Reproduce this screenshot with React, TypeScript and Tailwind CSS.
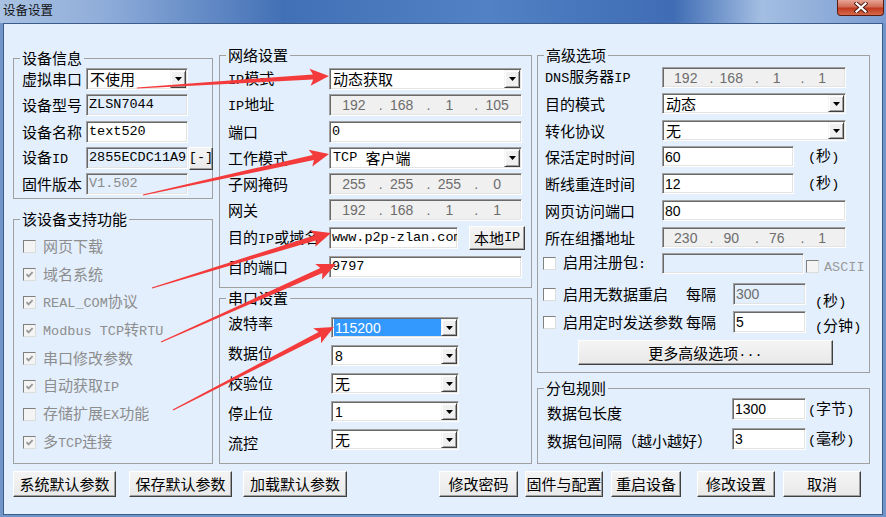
import React from "react";

const CJK = /[\u2E80-\u9FFF\uF900-\uFAFF\uFF00-\uFFEF\u3000-\u303F]/;

type Run = { cjk: boolean; t: string };
function runs(s: string): Run[] {
  const out: Run[] = [];
  for (const ch of s) {
    const c = CJK.test(ch);
    const last = out[out.length - 1];
    if (last && last.cjk === c) last.t += ch;
    else out.push({ cjk: c, t: ch });
  }
  return out;
}

function T({ t, sans }: { t: string; sans?: boolean }) {
  return (
    <>
      {runs(t).map((r, i) =>
        r.cjk ? (
          <span key={i} className="font-['Noto_Sans_CJK_SC',sans-serif] text-[15px]">
            {r.t}
          </span>
        ) : sans ? (
          <span key={i} className="font-['Liberation_Sans',sans-serif] text-[14px]">
            {r.t}
          </span>
        ) : (
          <span key={i} className="font-['Liberation_Mono',monospace] text-[13.5px]">
            {r.t}
          </span>
        )
      )}
    </>
  );
}

const SUNKEN =
  "border border-t-[#a0a0a0] border-l-[#a0a0a0] border-r-white border-b-white shadow-[inset_1px_1px_0_#696969,inset_-1px_-1px_0_#e3e3e3]";
const RAISED =
  "border border-t-white border-l-white border-r-[#404040] border-b-[#404040] shadow-[inset_-1px_-1px_0_#a0a0a0] bg-[linear-gradient(#f4f4f4,#e9e9e9)]";

function Label({ t, cls = "" }: { t: string; cls?: string }) {
  return (
    <div className={`whitespace-pre leading-[16px] shrink-0 ${cls}`}>
      <T t={t} />
    </div>
  );
}

function Field({
  t,
  cls = "",
  bg = "bg-white",
  color = "text-black",
  sans,
}: {
  t: string;
  cls?: string;
  bg?: string;
  color?: string;
  sans?: boolean;
}) {
  return (
    <div
      className={`${SUNKEN} ${bg} ${color} ${cls} shrink-0 flex items-center overflow-x-clip whitespace-pre leading-[16px] pl-[2px]`}
    >
      <T t={t} sans={sans} />
    </div>
  );
}

function DropBtn() {
  return (
    <div className="w-[16px] shrink-0 flex items-center justify-center border border-t-[#f4f4f4] border-l-[#f4f4f4] border-r-[#404040] border-b-[#404040] shadow-[inset_1px_1px_0_#fff,inset_-1px_-1px_0_#a0a0a0] bg-[#f0f0f0]">
      <svg width="7" height="4" viewBox="0 0 7 4">
        <path d="M0 0H7L3.5 4Z" fill="#000" />
      </svg>
    </div>
  );
}

function Select({ t, cls = "", sans, hl }: { t: string; cls?: string; sans?: boolean; hl?: boolean }) {
  return (
    <div className={`${SUNKEN} bg-white ${cls} shrink-0 flex items-stretch p-[1px] pl-[2px]`}>
      <div
        className={`flex-1 flex items-center whitespace-pre leading-[16px] pl-[1px] ${
          hl ? "bg-[#3399ff] text-white" : "text-black"
        }`}
      >
        <T t={t} sans={sans} />
      </div>
      <DropBtn />
    </div>
  );
}

function IP({ p, cls = "" }: { p: string[]; cls?: string }) {
  return (
    <div
      className={`${SUNKEN} bg-[#f0f0f0] text-[#6d6d6d] ${cls} shrink-0 flex items-center font-['Liberation_Sans',sans-serif] text-[14px] leading-[16px]`}
    >
      {p.map((x, i) => (
        <React.Fragment key={i}>
          {i > 0 && <span className="w-0 shrink-0 translate-x-[1px]">.</span>}
          <span className="flex-1 text-center">{x}</span>
        </React.Fragment>
      ))}
    </div>
  );
}

function CB({ on, dis, cls = "" }: { on?: boolean; dis?: boolean; cls?: string }) {
  return (
    <div
      className={`w-[13px] h-[13px] shrink-0 border border-t-[#808080] border-l-[#808080] border-r-[#dcdcdc] border-b-[#dcdcdc] ${
        dis ? "bg-[#f4f4f4]" : "bg-white"
      } flex items-center justify-center ${cls}`}
    >
      {on && (
        <svg width="9" height="9" viewBox="0 0 9 9">
          <path d="M1.5 4.2 L3.6 6.4 L7.6 2.2" fill="none" stroke={dis ? "#9a9a9a" : "#000"} strokeWidth="1.9" />
        </svg>
      )}
    </div>
  );
}

function Btn({ t, cls = "" }: { t: string; cls?: string }) {
  return (
    <div className={`${RAISED} ${cls} shrink-0 flex items-center justify-center whitespace-pre leading-[16px] text-black`}>
      <T t={t} />
    </div>
  );
}

function Group({ title, cls = "", children }: { title: string; cls?: string; children?: React.ReactNode }) {
  return (
    <fieldset className={`border border-[#a0a0a0] min-w-0 ${cls}`}>
      <legend className="ml-[6px] px-[2px] h-[16px] leading-[16px] whitespace-pre">
        <T t={title} />
      </legend>
      {children}
    </fieldset>
  );
}

const ARROWS: [number, number, number, number][] = [
  [137, 88, 329, 76],
  [143, 195, 329, 154],
  [152, 288, 331, 233],
  [161, 342, 336, 264],
  [173, 410, 334, 327],
];

function arrowPoints(sx: number, sy: number, tx: number, ty: number) {
  const dx = tx - sx;
  const dy = ty - sy;
  const L = Math.hypot(dx, dy);
  const ux = dx / L;
  const uy = dy / L;
  const nx = -uy;
  const ny = ux;
  const hl = 19;
  const hw = 8.5;
  const s0 = 0.6;
  const s1 = 2.6;
  const bx = tx - ux * hl;
  const by = ty - uy * hl;
  const pts = [
    [sx + nx * s0, sy + ny * s0],
    [bx + nx * s1 + ux * 3, by + ny * s1 + uy * 3],
    [bx + nx * hw, by + ny * hw],
    [tx, ty],
    [bx - nx * hw, by - ny * hw],
    [bx - nx * s1 + ux * 3, by - ny * s1 + uy * 3],
    [sx - nx * s0, sy - ny * s0],
  ];
  return pts.map((p) => `${p[0].toFixed(1)},${p[1].toFixed(1)}`).join(" ");
}

export default function App() {
  const feats: [string, boolean][] = [
    ["网页下载", false],
    ["域名系统", true],
    ["REAL_COM协议", true],
    ["Modbus TCP转RTU", true],
    ["串口修改参数", true],
    ["自动获取IP", true],
    ["存储扩展EX功能", false],
    ["多TCP连接", true],
  ];
  return (
    <div className="relative w-[886px] h-[517px] overflow-hidden bg-[#7194c9] flex flex-col font-['Noto_Sans_CJK_SC',sans-serif] text-[15px] leading-[16px] text-black">
      {/* title bar */}
      <div className="h-[23px] shrink-0 flex items-start bg-[linear-gradient(90deg,#a9c2e3_0%,#8eacd9_12%,#4270b6_32%,#5281c5_55%,#3f6cb4_76%,#a3bee2_86%,#7b9cd0_100%)]">
        <span className="ml-[3px] mt-[3px] text-[12.5px] leading-[14px] text-[#111]">设备设置</span>
        <div className="ml-auto mr-[2px] w-[47px] h-[16px] rounded-b-[4px] border border-t-0 border-[#5b1b10] bg-[linear-gradient(#e6a596,#d06c56_45%,#c03a1f_55%,#d56a4b)] flex items-center justify-center">
          <svg width="14" height="11" viewBox="0 0 14 11">
            <path d="M2.5 1.5 L11.5 9.5 M11.5 1.5 L2.5 9.5" stroke="#4a1a10" strokeWidth="4" strokeLinecap="square" />
            <path d="M2.5 1.5 L11.5 9.5 M11.5 1.5 L2.5 9.5" stroke="#fff" strokeWidth="2.2" strokeLinecap="square" />
          </svg>
        </div>
      </div>

      {/* client area */}
      <div className="mx-[3px] h-[492px] shrink-0 border border-[#3c5d8c] bg-[#e3effd] flex flex-col">
        <div className="flex pl-[9px] h-[440px]">
          {/* left column */}
          <div className="w-[200px] shrink-0 flex flex-col pt-[26px]">
            <Group title="设备信息" cls="h-[149px]">
              <div className="flex flex-col pl-[8px] pt-[2px]">
                <div className="flex items-center h-[22px]">
                  <Label t="虚拟串口" cls="w-[64px]" />
                  <Select t="不使用" cls="w-[102px] h-[22px]" />
                </div>
                <div className="flex items-center h-[22px] mt-[4px]">
                  <Label t="设备型号" cls="w-[64px]" />
                  <Field t="ZLSN7044" bg="bg-[#e3effd]" cls="w-[102px] h-[22px]" />
                </div>
                <div className="flex items-center h-[22px] mt-[5px]">
                  <Label t="设备名称" cls="w-[64px]" />
                  <Field t="text520" cls="w-[102px] h-[22px]" />
                </div>
                <div className="flex items-center h-[22px] mt-[4px]">
                  <Label t="设备ID" cls="w-[64px]" />
                  <Field t="2855ECDC11A9" bg="bg-[#e3effd]" cls="w-[102px] h-[22px]" />
                  <Btn t="[-]" cls="w-[24px] h-[23px] ml-[1px]" />
                </div>
                <div className="flex items-center h-[22px] mt-[4px]">
                  <Label t="固件版本" cls="w-[64px]" />
                  <Field t="V1.502" bg="bg-[#e3effd]" color="text-[#8a8a8a]" cls="w-[102px] h-[22px]" />
                </div>
              </div>
            </Group>
            <Group title="该设备支持功能" cls="h-[253px] mt-[12px]">
              <div className="flex flex-col pl-[9px] pt-[5px]">
                {feats.map(([t, on]) => (
                  <div key={t} className="flex items-center h-[28px]">
                    <CB on={on} dis />
                    <Label t={t} cls="ml-[7px] text-[#8d8d8d]" />
                  </div>
                ))}
              </div>
            </Group>
          </div>

          {/* middle column */}
          <div className="w-[313px] shrink-0 ml-[6px] flex flex-col pt-[23px]">
            <Group title="网络设置" cls="h-[241px]">
              <div className="flex flex-col pl-[8px] pt-[5px]">
                <div className="flex items-center h-[22px]">
                  <Label t="IP模式" cls="w-[101px]" />
                  <Select t="动态获取" cls="w-[193px] h-[22px]" />
                </div>
                <div className="flex items-center h-[22px] mt-[4px]">
                  <Label t="IP地址" cls="w-[101px]" />
                  <IP p={["192", "168", "1", "105"]} cls="w-[193px] h-[22px]" />
                </div>
                <div className="flex items-center h-[22px] mt-[5px]">
                  <Label t="端口" cls="w-[101px]" />
                  <Field t="0" cls="w-[193px] h-[22px]" />
                </div>
                <div className="flex items-center h-[22px] mt-[4px]">
                  <Label t="工作模式" cls="w-[101px]" />
                  <Select t="TCP 客户端" cls="w-[193px] h-[22px]" />
                </div>
                <div className="flex items-center h-[22px] mt-[4px]">
                  <Label t="子网掩码" cls="w-[101px]" />
                  <IP p={["255", "255", "255", "0"]} cls="w-[193px] h-[22px]" />
                </div>
                <div className="flex items-center h-[22px] mt-[4px]">
                  <Label t="网关" cls="w-[101px]" />
                  <IP p={["192", "168", "1", "1"]} cls="w-[193px] h-[22px]" />
                </div>
                <div className="flex items-center h-[24px] mt-[5px]">
                  <Label t="目的IP或域名" cls="w-[101px]" />
                  <Field t="www.p2p-zlan.com" cls="w-[129px] h-[22px]" />
                  <Btn t="本地IP" cls="w-[56px] h-[24px] ml-[11px]" />
                </div>
                <div className="flex items-center h-[22px] mt-[6px]">
                  <Label t="目的端口" cls="w-[101px]" />
                  <Field t="9797" cls="w-[193px] h-[22px]" />
                </div>
              </div>
            </Group>
            <Group title="串口设置" cls="h-[174px] mt-[2px]">
              <div className="flex pl-[8px]">
                <div className="w-[103px] shrink-0 flex flex-col pt-[7px] gap-[10px]">
                  {["波特率", "数据位", "校验位", "停止位", "流控"].map((l) => (
                    <div key={l} className="h-[20px] flex items-center">
                      <Label t={l} />
                    </div>
                  ))}
                </div>
                <div className="flex flex-col pt-[11px] gap-[7px]">
                  <Select t="115200" sans hl cls="w-[128px] h-[21px]" />
                  <Select t="8" sans cls="w-[128px] h-[21px]" />
                  <Select t="无" cls="w-[128px] h-[21px]" />
                  <Select t="1" sans cls="w-[128px] h-[21px]" />
                  <Select t="无" cls="w-[128px] h-[21px]" />
                </div>
              </div>
            </Group>
          </div>

          {/* right column */}
          <div className="w-[333px] shrink-0 ml-[5px] flex flex-col pt-[23px]">
            <Group title="高级选项" cls="h-[326px]">
              <div className="flex flex-col pl-[7px] pt-[4px]">
                <div className="flex items-center h-[21px]">
                  <Label t="DNS服务器IP" cls="w-[117px]" />
                  <IP p={["192", "168", "1", "1"]} cls="w-[184px] h-[21px]" />
                </div>
                <div className="flex items-center h-[21px] mt-[5px]">
                  <Label t="目的模式" cls="w-[117px]" />
                  <Select t="动态" cls="w-[184px] h-[21px]" />
                </div>
                <div className="flex items-center h-[21px] mt-[6px]">
                  <Label t="转化协议" cls="w-[117px]" />
                  <Select t="无" cls="w-[184px] h-[21px]" />
                </div>
                <div className="flex items-center h-[21px] mt-[5px]">
                  <Label t="保活定时时间" cls="w-[117px]" />
                  <Field t="60" sans cls="w-[132px] h-[21px]" />
                  <Label t="(秒)" cls="ml-[14px]" />
                </div>
                <div className="flex items-center h-[21px] mt-[6px]">
                  <Label t="断线重连时间" cls="w-[117px]" />
                  <Field t="12" sans cls="w-[132px] h-[21px]" />
                  <Label t="(秒)" cls="ml-[14px]" />
                </div>
                <div className="flex items-center h-[21px] mt-[6px]">
                  <Label t="网页访问端口" cls="w-[117px]" />
                  <Field t="80" sans cls="w-[184px] h-[21px]" />
                </div>
                <div className="flex items-center h-[21px] mt-[6px]">
                  <Label t="所在组播地址" cls="w-[117px]" />
                  <IP p={["230", "90", "76", "1"]} cls="w-[184px] h-[21px]" />
                </div>
                <div className="flex items-center h-[21px] mt-[5px] -ml-[2px]">
                  <CB />
                  <Label t="启用注册包:" cls="w-[99px] ml-[7px]" />
                  <Field t="" bg="bg-[#e3effd]" cls="w-[142px] h-[21px]" />
                  <CB dis cls="ml-[2px] mt-[6px]" />
                  <Label t="ASCII" cls="ml-[5px] mt-[6px] text-[#9a9a9a]" />
                </div>
                <div className="flex items-center h-[22px] mt-[9px] -ml-[2px]">
                  <CB />
                  <Label t="启用无数据重启" cls="w-[123px] ml-[7px]" />
                  <Label t="每隔" cls="w-[47px]" />
                  <Field t="300" sans bg="bg-[#e3effd]" color="text-[#6d6d6d]" cls="w-[73px] h-[22px]" />
                  <Label t="(秒)" cls="ml-[9px] mt-[14px]" />
                </div>
                <div className="flex items-center h-[22px] mt-[6px] -ml-[2px]">
                  <CB />
                  <Label t="启用定时发送参数" cls="w-[123px] ml-[7px]" />
                  <Label t="每隔" cls="w-[47px]" />
                  <Field t="5" sans cls="w-[73px] h-[22px]" />
                  <Label t="(分钟)" cls="ml-[9px] mt-[8px]" />
                </div>
                <div className="flex items-center h-[25px] mt-[7px]">
                  <Btn t="更多高级选项..." cls="w-[255px] h-[25px] ml-[33px]" />
                </div>
              </div>
            </Group>
            <Group title="分包规则" cls="h-[84px] mt-[7px]">
              <div className="flex flex-col pl-[9px] pt-[2px]">
                <div className="flex items-center h-[22px]">
                  <div className="w-[185px] shrink-0 h-full flex items-center pt-[8px]">
                    <Label t="数据包长度" />
                  </div>
                  <Field t="1300" sans cls="w-[74px] h-[22px]" />
                  <Label t="(字节)" cls="ml-[2px]" />
                </div>
                <div className="flex items-center h-[22px] mt-[8px]">
                  <div className="w-[185px] shrink-0 h-full flex items-center pt-[4px]">
                    <Label t="数据包间隔（越小越好）" />
                  </div>
                  <Field t="3" sans cls="w-[74px] h-[22px]" />
                  <Label t="(毫秒)" cls="ml-[2px]" />
                </div>
              </div>
            </Group>
          </div>
        </div>

        {/* bottom buttons */}
        <div className="flex pl-[9px] mt-[7px]">
          <Btn t="系统默认参数" cls="w-[103px] h-[26px]" />
          <Btn t="保存默认参数" cls="w-[103px] h-[26px] ml-[13px]" />
          <Btn t="加载默认参数" cls="w-[104px] h-[26px] ml-[11px]" />
          <Btn t="修改密码" cls="w-[79px] h-[26px] ml-[92px]" />
          <Btn t="固件与配置" cls="w-[78px] h-[26px] ml-[7px]" />
          <Btn t="重启设备" cls="w-[70px] h-[26px] ml-[8px]" />
          <Btn t="修改设置" cls="w-[78px] h-[26px] ml-[16px]" />
          <Btn t="取消" cls="w-[78px] h-[26px] ml-[8px]" />
        </div>
      </div>

      {/* annotation arrows */}
      <svg className="absolute inset-0 pointer-events-none" width="886" height="517" viewBox="0 0 886 517">
        {ARROWS.map((a, i) => (
          <polygon key={i} points={arrowPoints(a[0], a[1], a[2], a[3])} fill="#f43b3b" />
        ))}
      </svg>
    </div>
  );
}
